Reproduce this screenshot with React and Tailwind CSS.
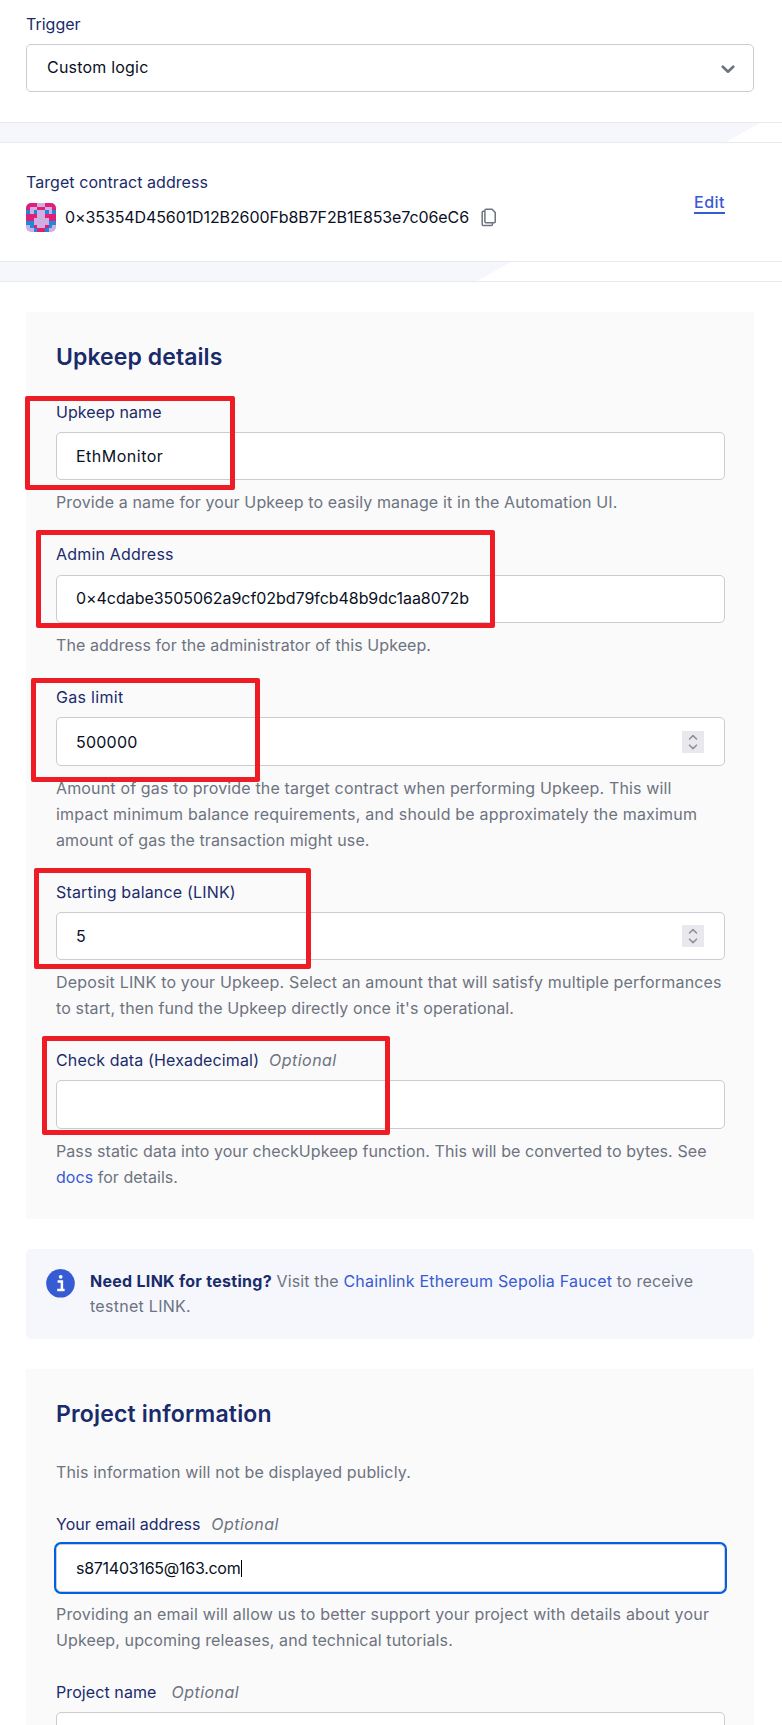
const INPUT =
  "flex items-center rounded-[5px] border border-[#cacbd3] bg-white pl-[19px] text-[16px] leading-[26px] text-[#0a1024]";
const LABEL = "h-[26px] text-[16px] leading-[26px] whitespace-pre text-[#1a2b6b]";
const HELP = "text-[16px] leading-[26px] whitespace-nowrap text-[#6d7380]";

const CELLS = [
  "PPPLLPPP",
  "PLLPPLLP",
  "BLBLLBLB",
  "PPPLLPPP",
  "PPLLLLPP",
  "BBLLLLBB",
  "LBPLLPBL",
  "LLBPPBLL",
];
const CELL_COLORS = { P: "#e01f79", L: "#cfaee2", B: "#1e88dd" };

function Identicon() {
  return (
    <svg viewBox="0 0 8 8" preserveAspectRatio="none" shapeRendering="crispEdges" className="h-[29px] w-[30px] rounded-[5px]">
      {CELLS.map((row, y) =>
        row.split("").map((c, x) => (
          <rect key={`${x}-${y}`} x={x} y={y} width="1" height="1" fill={CELL_COLORS[c]} />
        ))
      )}
    </svg>
  );
}

function CopyIcon() {
  return (
    <svg width="16" height="19" viewBox="0 0 16 19" fill="none" stroke="#6d7380" strokeWidth="1.5" strokeLinejoin="round" className="mt-[-1px] ml-[12px]">
      <path d="M5 1.25H11L14.25 4.5V13.75Q14.25 14.75 13.25 14.75H4.9Q3.9 14.75 3.9 13.75V2.25Q3.9 1.25 4.9 1.25Z" />
      <path d="M3.9 3.25H2.2Q1.2 3.25 1.2 4.25V16.4Q1.2 17.4 2.2 17.4H10.4Q11.4 17.4 11.4 16.4V14.75" />
    </svg>
  );
}

function Stepper() {
  return (
    <div className="mr-5 ml-auto flex h-[22px] w-[22px] items-center justify-center bg-[#e9e9ed]">
      <svg width="22" height="22" viewBox="0 0 22 22" fill="none" stroke="#8f8f9d" strokeWidth="1.6" strokeLinecap="round" strokeLinejoin="round">
        <path d="M7.5 8L11 4.6L14.5 8" />
        <path d="M7.5 14.2L11 17.6L14.5 14.2" />
      </svg>
    </div>
  );
}

function Mark({ className }) {
  return <div className={`pointer-events-none absolute rounded-[2px] border-[5px] border-[#ee1c24] ${className}`} />;
}

function Divider({ wedge }) {
  return (
    <div className="h-[21px] border-y border-[#e9eaee] bg-white">
      <svg width="782" height="19" viewBox="0 0 782 19" className="block">
        <path d={wedge} fill="#f5f7fd" />
      </svg>
    </div>
  );
}

function Optional({ className }) {
  return <span className={`tracking-[0.45px] text-[#6d7380] italic ${className}`}>Optional</span>;
}

export default function App() {
  return (
    <div className="h-[1725px] w-[782px] overflow-hidden bg-white font-['Inter',sans-serif]">
      <section className="h-[122px] pt-[11px] pr-[28px] pl-[26px]">
        <div className={LABEL}>Trigger</div>
        <div className={`mt-[7px] h-[48px] pb-[2px] tracking-[0.2px] ${INPUT}`}>
          <span className="ml-px">Custom logic</span>
          <svg width="14" height="9" viewBox="0 0 14 9" fill="none" stroke="#6d7380" strokeWidth="2.6" strokeLinecap="round" strokeLinejoin="round" className="mt-[4px] mr-[18px] ml-auto">
            <path d="M1.8 1.7L7 6.7L12.2 1.7" />
          </svg>
        </div>
      </section>

      <Divider wedge="M0 0H760L726 19H0Z" />

      <section className="flex h-[118px] justify-between pr-[57px] pl-[26px]">
        <div className="pt-[26px]">
          <div className={`tracking-[0.06px] ${LABEL}`}>Target contract address</div>
          <div className="mt-[8px] flex h-[29px] items-center">
            <Identicon />
            <span className="ml-[9px] pb-[2px] text-[16px] leading-[26px] tracking-[-0.1px] text-[#0a1024]">
              0×35354D45601D12B2600Fb8B7F2B1E853e7c06eC6
            </span>
            <CopyIcon />
          </div>
        </div>
        <div className="pt-[50px]">
          <a className="block h-[21px] border-b-2 border-[#375bd2] text-[16px] leading-[18px] font-medium tracking-[0.5px] text-[#375bd2]">
            Edit
          </a>
        </div>
      </section>

      <Divider wedge="M0 0H511L477 19H0Z" />

      <section className="mt-[30px] mr-[28px] ml-[26px] h-[907px] bg-[#fafafa] pt-[29px] pr-[29px] pl-[30px]">
        <h2 className="h-[31px] text-[23px] leading-[32px] font-semibold tracking-[0.08px] text-[#1a2b6b]">Upkeep details</h2>

        <div className="relative mt-[27px]">
          <div className={`tracking-[0.06px] ${LABEL}`}>Upkeep name</div>
          <div className={`mt-[7px] h-[48px] tracking-[0.5px] ${INPUT}`}>EthMonitor</div>
          <p className={`mt-[9px] tracking-[0.125px] ${HELP}`}>
            Provide a name for your Upkeep to easily manage it in the Automation UI.
          </p>
          <Mark className="top-[-3px] left-[-31px] h-[94px] w-[210px]" />
        </div>

        <div className="relative mt-[26px]">
          <div className={`tracking-[0.18px] ${LABEL}`}>Admin Address</div>
          <div className={`mt-[8px] h-[48px] pb-[2px] tracking-[-0.05px] ${INPUT}`}>0×4cdabe3505062a9cf02bd79fcb48b9dc1aa8072b</div>
          <p className={`mt-[9px] tracking-[0.075px] ${HELP}`}>The address for the administrator of this Upkeep.</p>
          <Mark className="top-[-11px] left-[-20px] h-[98px] w-[459px]" />
        </div>

        <div className="relative mt-[26px]">
          <div className={`tracking-[0.31px] ${LABEL}`}>Gas limit</div>
          <div className={`mt-[7px] h-[49px] tracking-[0.22px] ${INPUT}`}>
            500000
            <Stepper />
          </div>
          <p className={`mt-[9px] ${HELP}`}>
            <span className="block tracking-[0.155px]">Amount of gas to provide the target contract when performing Upkeep. This will</span>
            <span className="block tracking-[0.2px]">impact minimum balance requirements, and should be approximately the maximum</span>
            <span className="block tracking-[0.11px]">amount of gas the transaction might use.</span>
          </p>
          <Mark className="top-[-6px] left-[-25px] h-[104px] w-[229px]" />
        </div>

        <div className="relative mt-[26px]">
          <div className={`tracking-[0.18px] ${LABEL}`}>Starting balance (LINK)</div>
          <div className={`mt-[7px] h-[48px] ${INPUT}`}>
            5
            <Stepper />
          </div>
          <p className={`mt-[9px] ${HELP}`}>
            <span className="block tracking-[0.17px]">Deposit LINK to your Upkeep. Select an amount that will satisfy multiple performances</span>
            <span className="block tracking-[0.13px]">to start, then fund the Upkeep directly once it's operational.</span>
          </p>
          <Mark className="top-[-11px] left-[-22px] h-[101px] w-[277px]" />
        </div>

        <div className="relative mt-[26px]">
          <div className={`tracking-[0.14px] ${LABEL}`}>
            Check data (Hexadecimal)
            <Optional className="ml-[10px]" />
          </div>
          <div className={`mt-[7px] h-[49px] ${INPUT}`} />
          <p className={`mt-[9px] ${HELP}`}>
            <span className="block tracking-[0.08px]">Pass static data into your checkUpkeep function. This will be converted to bytes. See</span>
            <span className="block tracking-[0.04px]">
              <a className="text-[#375bd2]">docs</a> for details.
            </span>
          </p>
          <Mark className="top-[-11px] left-[-14px] h-[99px] w-[348px]" />
        </div>
      </section>

      <section className="mt-[30px] mr-[28px] ml-[26px] flex h-[90px] rounded-[5px] bg-[#f5f7fd] pt-[20px] pl-[20px]">
        <svg width="29" height="29" viewBox="0 0 29 29" className="shrink-0">
          <circle cx="14.5" cy="14.3" r="14.3" fill="#375bd2" />
          <circle cx="14.7" cy="7.8" r="1.9" fill="#fff" />
          <path d="M11.6 12.4H15.9V20.6M11.2 20.9H18.6" fill="none" stroke="#fff" strokeWidth="2.5" />
        </svg>
        <div className="ml-[15px] text-[16px] leading-[25px] whitespace-nowrap text-[#6d7380]">
          <p>
            <strong className="font-bold tracking-[0.28px] text-[#1a2b6b]">Need LINK for testing?</strong>
            <span className="tracking-[0.14px]"> Visit the </span>
            <a className="tracking-[0.2px] text-[#375bd2]">Chainlink Ethereum Sepolia Faucet</a>
            <span className="tracking-[0.18px]"> to receive</span>
          </p>
          <p className="tracking-[0.28px]">testnet LINK.</p>
        </div>
      </section>

      <section className="mt-[30px] mr-[28px] ml-[26px] h-[400px] bg-[#fafafa] pt-[29px] pr-[29px] pl-[30px]">
        <h2 className="h-[31px] text-[23px] leading-[32px] font-semibold tracking-[0.18px] text-[#1a2b6b]">Project information</h2>
        <p className={`mt-[30px] tracking-[0.14px] ${HELP}`}>This information will not be displayed publicly.</p>

        <div className="mt-[26px]">
          <div className={LABEL}>
            Your email address
            <Optional className="ml-[11px]" />
          </div>
          <div className={`mt-[7px] h-[48px] tracking-[-0.26px] ring-2 ring-[#0060df] ${INPUT}`}>
            s871403165@163.com
            <span className="ml-px h-[17px] w-px bg-black" />
          </div>
          <p className={`mt-[9px] ${HELP}`}>
            <span className="block tracking-[0.19px]">Providing an email will allow us to better support your project with details about your</span>
            <span className="block tracking-[0.11px]">Upkeep, upcoming releases, and technical tutorials.</span>
          </p>
        </div>

        <div className="mt-[26px]">
          <div className={`tracking-[0.09px] ${LABEL}`}>
            Project name
            <Optional className="ml-[15px]" />
          </div>
          <div className={`mt-[7px] h-[48px] ${INPUT}`} />
        </div>
      </section>
    </div>
  );
}
